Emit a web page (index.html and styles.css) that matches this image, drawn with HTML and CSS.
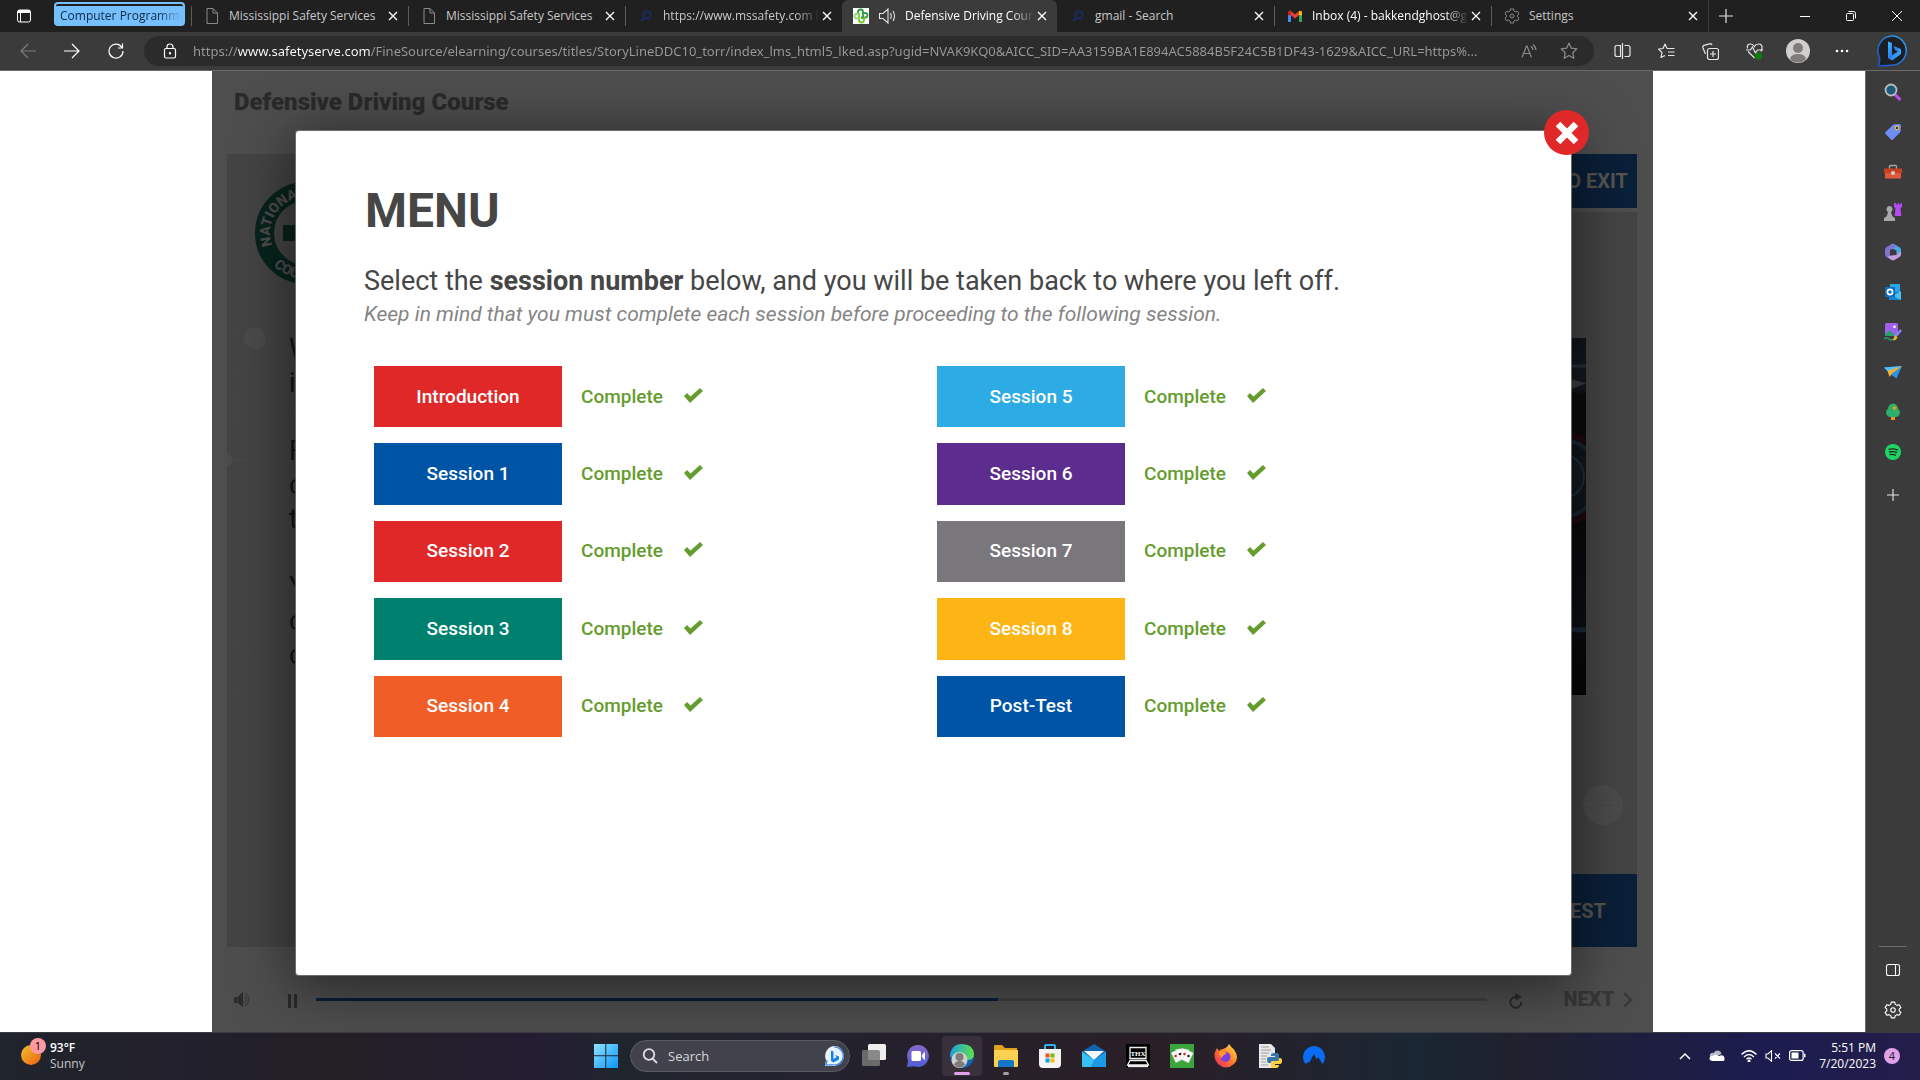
FILE: index.html
```html
<!DOCTYPE html>
<html lang="en">
<head>
<meta charset="utf-8">
<title>Defensive Driving Course</title>
<link rel="stylesheet" href="styles.css">
</head>
<body>
<header class="tabstrip">
  <button class="tab-actions" aria-label="Tab actions"><svg width="16" height="16" viewBox="0 0 16 16" fill="none" stroke="#fff"><rect x="1.5" y="2" width="13" height="12" rx="2"/><path d="M2 3.500h12" stroke-width="3"/><path d="M4.500 4v10"/></svg></button>
  <button class="tab-group"><span>Computer Programmi</span></button>
  <nav class="tabs" aria-label="Tabs">
    <div class="tab"><svg class="favicon" viewBox="0 0 16 16" fill="none" stroke="#8a8a8a"><path d="M3 .5h6l4.500 4.500v10.500H3zM9 .5V5h4.500"/></svg><a href="#t1">Mississippi Safety Services</a><button class="close" aria-label="Close tab"><svg viewBox="0 0 10 10"><path d="M1 1l8 8M9 1l-8 8"/></svg></button></div>
    <div class="tab"><svg class="favicon" viewBox="0 0 16 16" fill="none" stroke="#8a8a8a"><path d="M3 .5h6l4.500 4.500v10.500H3zM9 .5V5h4.500"/></svg><a href="#t2">Mississippi Safety Services</a><button class="close" aria-label="Close tab"><svg viewBox="0 0 10 10"><path d="M1 1l8 8M9 1l-8 8"/></svg></button></div>
    <div class="tab"><svg class="favicon" viewBox="0 0 16 16" fill="none" stroke="#1b2a6b" stroke-width="1.800"><circle cx="9" cy="7" r="3.600"/><path d="M6.500 9.500L3 13"/></svg><a href="#t3" class="fade">https://www.mssafety.com lo</a><button class="close" aria-label="Close tab"><svg viewBox="0 0 10 10"><path d="M1 1l8 8M9 1l-8 8"/></svg></button></div>
    <div class="tab active"><svg class="favicon" viewBox="0 0 16 16"><path fill="#fff" d="M0 0h16v16H0z"/><g fill="none" stroke-width="1.800"><path stroke="#2e9e3f" d="M5 7V4q0-2.500 2.500-2.500T10 4v7"/><path stroke="#2e9e3f" d="M9 5h3q2.500 0 2.500 2.300T12 9.500H8"/><path stroke="#6ccf1c" d="M11 9v3q0 2.500-2.500 2.500T6 12V6"/><path stroke="#8fdc6a" d="M7 10.500H4Q1.500 10.500 1.500 8T4 6h3"/></g></svg><svg class="audio" viewBox="0 0 18 16" fill="none" stroke="#e6e6e6" stroke-width="1.100"><path d="M1.500 5.500H5L10 1v14L5 10.500H1.500zM12.500 5q1.500 3 0 6M15 3q3 5 0 10"/></svg><a href="#t4" class="fade">Defensive Driving Cours</a><button class="close" aria-label="Close tab"><svg viewBox="0 0 10 10"><path d="M1 1l8 8M9 1l-8 8"/></svg></button></div>
    <div class="tab"><svg class="favicon" viewBox="0 0 16 16" fill="none" stroke="#1b2a6b" stroke-width="1.800"><circle cx="9" cy="7" r="3.600"/><path d="M6.500 9.500L3 13"/></svg><a href="#t5">gmail - Search</a><button class="close" aria-label="Close tab"><svg viewBox="0 0 10 10"><path d="M1 1l8 8M9 1l-8 8"/></svg></button></div>
    <div class="tab bright"><svg class="favicon" viewBox="0 0 16 16" fill="none" stroke-width="3"><path stroke="#4285f4" d="M2.500 14V5"/><path stroke="#34a853" d="M13.500 14V5"/><path stroke="#ea4335" d="M2 3.500l6 5 6-5"/><path stroke="#fbbc04" d="M13.500 3.200v4"/><path stroke="#c5221f" d="M2.500 3.200v4"/></svg><a href="#t6" class="fade">Inbox (4) - bakkendghost@g</a><button class="close" aria-label="Close tab"><svg viewBox="0 0 10 10"><path d="M1 1l8 8M9 1l-8 8"/></svg></button></div>
    <div class="tab"><svg class="favicon" viewBox="0 0 16 16" fill="none" stroke="#8a8a8a"><circle cx="8" cy="8" r="2"/><path d="M6.500 1h3l.5 2 1.500.9 2-.6 1.500 2.600L13.500 7.300v1.400l1.500 1.400-1.500 2.600-2-.6-1.500.9-.5 2h-3L6 13l-1.500-.9-2 .6L1 10.100l1.500-1.400V7.300L1 5.900l1.500-2.600 2 .6L6 3z" stroke-linejoin="round"/></svg><a href="#t7">Settings</a><button class="close" aria-label="Close tab"><svg viewBox="0 0 10 10"><path d="M1 1l8 8M9 1l-8 8"/></svg></button></div>
  </nav>
  <button class="new-tab" aria-label="New tab"><svg width="14" height="14" viewBox="0 0 14 14" stroke="#e6e6e6" stroke-width="1.200"><path d="M7 0v14M0 7h14"/></svg></button>
  <div class="window-controls">
    <button aria-label="Minimize"><svg width="10" height="10" viewBox="0 0 10 10" fill="none" stroke="#fff"><path d="M0 5.500h10"/></svg></button>
    <button aria-label="Restore"><svg width="10" height="10" viewBox="0 0 10 10" fill="none" stroke="#fff"><rect x=".5" y="2.500" width="7" height="7" rx="1"/><path d="M2.500.5h5q2 0 2 2v5"/></svg></button>
    <button aria-label="Close"><svg width="10" height="10" viewBox="0 0 10 10" fill="none" stroke="#fff"><path d="M0 0l10 10M10 0L0 10"/></svg></button>
  </div>
</header>

<div class="toolbar">
  <button class="nav-btn" aria-label="Back"><svg width="16" height="16" viewBox="0 0 16 16" fill="none" stroke="#7d7d7d" stroke-width="1.200"><path d="M16 8H1M8 1L1 8l7 7"/></svg></button>
  <button class="nav-btn" aria-label="Forward"><svg width="16" height="16" viewBox="0 0 16 16" fill="none" stroke="#fff" stroke-width="1.200"><path d="M0 8h15M8 1l7 7-7 7"/></svg></button>
  <button class="nav-btn" aria-label="Refresh"><svg width="16" height="16" viewBox="0 0 16 16" fill="none" stroke="#fff" stroke-width="1.200"><path d="M14 4.500A7 7 0 1 0 15 8M14.500.5v4.500h-4.500"/></svg></button>
  <div class="address">
    <svg width="14" height="16" viewBox="0 0 14 16" fill="none" stroke="#fff" stroke-width="1.200"><rect x="1.500" y="5.500" width="11" height="9.500" rx="1.500"/><path d="M4 5.500V4q0-3 3-3t3 3v1.500"/><circle cx="7" cy="10.300" r=".6" fill="#fff"/></svg>
    <input class="url" type="text" aria-label="Address" value="https://www.safetyserve.com/FineSource/elearning/courses/titles/StoryLineDDC10_torr/index_lms_html5_lked.asp?ugid=NVAK9KQ0&amp;AICC_SID=AA3159BA1E894AC5884B5F24C5B1DF43-1629&amp;AICC_URL=https%...">
    <button aria-label="Read aloud"><svg width="16" height="16" viewBox="0 0 16 16" fill="none" stroke="#8c8c8c" stroke-width="1.200"><path d="M1 14.500L5.500 3h.5l4.500 11.500M2.500 10.500h6.500M10 3.500q2 1.500 2 3.500M12 1.500q3 2.500 3 5.500"/></svg></button>
    <button aria-label="Add to favorites"><svg width="18" height="18" viewBox="0 0 16 16" fill="none" stroke="#8c8c8c" stroke-width="1.100" stroke-linejoin="round"><path d="M8 1l2.100 4.500 4.900.6-3.600 3.400.9 4.900L8 12l-4.300 2.400.9-4.900L1 6.100l4.900-.6z"/></svg></button>
  </div>
  <div class="tools">
    <button aria-label="Split screen"><svg width="17" height="16" viewBox="0 0 17 16" fill="none" stroke="#e6e6e6" stroke-width="1.200"><path d="M6.500 2.500H3q-2 0-2 2v7q0 2 2 2h3.500zM10.500 2.500H14q2 0 2 2v7q0 2-2 2h-3.500M8.500 0v16"/></svg></button>
    <button aria-label="Favorites"><svg width="17" height="16" viewBox="0 0 17 16" fill="none" stroke="#e6e6e6" stroke-width="1.200" stroke-linejoin="round"><path d="M9 5.500h0L7 1 5 5.500l-4.500.6L4 9.500 3 14.500l4-2M9 5.500h7.500M10 9h6.500M10 12.500h6.500"/></svg></button>
    <button aria-label="Collections"><svg width="17" height="17" viewBox="0 0 17 17" fill="none" stroke="#e6e6e6" stroke-width="1.200"><rect x="5.500" y="5.500" width="11" height="11" rx="2"/><path d="M11 8v6M8 11h6M3.500 11L1 5q-.6-2 1-2.600L7.500.8q2-.5 2.500 1.200"/></svg></button>
    <button aria-label="Browser essentials"><svg width="17" height="18" viewBox="0 0 17 18" fill="none" stroke="#e6e6e6" stroke-width="1.200"><path d="M8.500 16L2 9.500M1.500 6.500Q.5 2 4.500 2q2.500 0 4 2.500Q10 2 12.500 2q4 0 3.500 4.500l-1 3M0 8h4.500L6.500 5l3 6 2-3H17"/><circle cx="12.500" cy="14" r="3.800" fill="#0f7b0f" stroke="none"/></svg></button>
    <button aria-label="Profile"><svg width="24" height="24" viewBox="0 0 24 24"><circle cx="12" cy="12" r="12" fill="#d2d0ce"/><circle cx="12" cy="9" r="5" fill="#7f7d7b"/><path d="M4 20q1-5 8-5t8 5q-3 3.500-8 3.500T4 20z" fill="#7f7d7b"/></svg></button>
    <button aria-label="Settings and more"><svg width="14" height="4" viewBox="0 0 14 4" fill="#fff"><circle cx="2" cy="2" r="1.300"/><circle cx="7" cy="2" r="1.300"/><circle cx="12" cy="2" r="1.300"/></svg></button>
  </div>
  <button class="bing" aria-label="Bing chat"><svg width="32" height="32" viewBox="0 0 32 32"><defs><linearGradient id="bingRing" x1="0" y1="1" x2="1" y2="0"><stop stop-color="#1b4fd0"/><stop offset="1" stop-color="#29a5ea"/></linearGradient><linearGradient id="bingB" x1="0" y1="0" x2="1" y2="1"><stop stop-color="#37bdff"/><stop offset=".5" stop-color="#2f7bf5"/><stop offset="1" stop-color="#33d0e8"/></linearGradient></defs><path d="M16 1a14.500 14.500 0 1 1-3 29.200Q8 31 1.500 30.500 3 27 2.500 22A14.500 14.500 0 0 1 16 1z" fill="#1d1f24" stroke="url(#bingRing)" stroke-width="1.500"/><path d="M11 6.500l4 1.500v12l6-3.500-3-1.500-1.500-4 7.500 3v5L15 25.500l-4-2.500z" fill="url(#bingB)"/></svg></button>
</div>

<div class="workspace">
  <main class="page">
    <section class="stage">
      <h1 class="course-title">Defensive Driving Course</h1>
      <div class="slide">
        <svg class="network" aria-hidden="true"><g fill="#4b4b4b"><circle cx="28" cy="184" r="11"/><circle cx="0" cy="306" r="6"/><circle cx="1376" cy="651" r="20"/></g><g fill="none" stroke="#484848"><path d="M28 184L2 280M0 210l80 60M0 276l80 16M6 306h70M0 480l80 66M0 532l80 30M0 180l28 4M1345 646h60M1345 655l60-6M1360 535l50 26M1360 625l-14-20"/></g></svg>
        <div class="slide-left">
          <svg class="logo" width="102" height="102" viewBox="-51 -51 102 102"><circle r="41.500" fill="none" stroke="#08231c" stroke-width="19"/><path d="M-23-8h15v-15H8v15h15V8H8v15H-8V8h-15z" fill="#08231c"/><path id="arcTop" d="M-36 0A36 36 0 0 1 36 0" fill="none" transform="rotate(-25)"/><path id="arcLow" d="M-46 0A46 46 0 0 0 46 0" fill="none"/><text class="seal"><textPath href="#arcTop" startOffset="3">NATIONAL</textPath></text><text class="seal"><textPath href="#arcLow" startOffset="36">COUNCIL</textPath></text></svg>
          <p class="copy">W<br>i<br><br>F<br>c<br>t<br><br>Y<br>c<br>c</p>
        </div>
        <div class="slide-right">
          <button class="dark-btn exit">TO EXIT</button>
          <svg class="photo" viewBox="0 0 40 356" preserveAspectRatio="none"><defs><linearGradient id="dash" x1="0" y1="0" x2="0" y2="1"><stop stop-color="#0f151b"/><stop offset=".07" stop-color="#121820"/><stop offset=".14" stop-color="#151a21"/><stop offset=".16" stop-color="#0a0b0b"/><stop offset=".5" stop-color="#08090a"/><stop offset=".8" stop-color="#0c0e12"/><stop offset=".86" stop-color="#090909"/><stop offset="1" stop-color="#060606"/></linearGradient></defs><path fill="url(#dash)" d="M0 0h40v356H0z"/><path d="M25 28h15" stroke="#26323f" stroke-width="3"/><path d="M25 41l15 4-15 6z" fill="#3c4042"/><circle cx="16" cy="140" r="44" fill="#0c1116" stroke="#1e080e" stroke-width="6"/><circle cx="16" cy="140" r="38" fill="#0f161c" stroke="#1a2630" stroke-width="4"/><circle cx="16" cy="138" r="22" fill="#111a22" stroke="#222e38" stroke-width="2"/><path d="M25 291h15" stroke="#182838" stroke-width="5"/></svg>
          <button class="dark-btn post">POST-TEST</button>
        </div>
      </div>
      <div class="player">
        <button aria-label="Volume"><svg width="17" height="15" viewBox="0 0 17 15"><path d="M0 5h3.500v6H0zM4 4.500L9 0v15L4 11z" fill="#2b2b2b"/><path d="M10.500 4q4 3.500 0 7M11 1q8 6.500 0 13" fill="none" stroke="#3c3c3c" stroke-width="1.500"/></svg></button>
        <button class="pause" aria-label="Pause"><svg width="10" height="14" viewBox="0 0 10 14" fill="#292929"><path d="M0 0h3v14H0zM6 0h3v14H6z"/></svg></button>
        <progress class="seek" value="58.2" max="100" aria-label="Slide progress"></progress>
        <button class="replay" aria-label="Replay"><svg width="14" height="16" viewBox="0 0 14 16"><path d="M8 4A5.500 5.500 0 1 0 12.300 9" fill="none" stroke="#2b2b2b" stroke-width="2"/><path d="M6.500 0l6.500 4-6.500 3.500z" fill="#2b2b2b"/></svg></button>
        <button class="next">NEXT <svg width="9" height="16" viewBox="0 0 9 16" fill="none" stroke="#373737" stroke-width="2"><path d="M1 2l7 7-7 7"/></svg></button>
      </div>

      <div class="modal" role="dialog" aria-labelledby="menu-title">
        <button class="modal-close" aria-label="Close menu"><svg width="24" height="24" viewBox="0 0 24 24" stroke="#fff" stroke-width="6.500"><path d="M3 3l18 18M21 3L3 21"/></svg></button>
        <h2 id="menu-title">MENU</h2>
        <p class="lead">Select the <b>session number</b> below, and you will be taken back to where you left off.</p>
        <p class="note">Keep in mind that you must complete each session before proceeding to the following session.</p>
        <ul class="sessions">
          <li><button class="red">Introduction</button><span>Complete</span><svg viewBox="0 0 20 15"><path d="M1 8l3-3 3.500 3.500L17 0l3 3L7 15z"/></svg></li>
          <li><button class="blue">Session 1</button><span>Complete</span><svg viewBox="0 0 20 15"><path d="M1 8l3-3 3.500 3.500L17 0l3 3L7 15z"/></svg></li>
          <li><button class="red">Session 2</button><span>Complete</span><svg viewBox="0 0 20 15"><path d="M1 8l3-3 3.500 3.500L17 0l3 3L7 15z"/></svg></li>
          <li><button class="green">Session 3</button><span>Complete</span><svg viewBox="0 0 20 15"><path d="M1 8l3-3 3.500 3.500L17 0l3 3L7 15z"/></svg></li>
          <li><button class="orange">Session 4</button><span>Complete</span><svg viewBox="0 0 20 15"><path d="M1 8l3-3 3.500 3.500L17 0l3 3L7 15z"/></svg></li>
          <li><button class="sky">Session 5</button><span>Complete</span><svg viewBox="0 0 20 15"><path d="M1 8l3-3 3.500 3.500L17 0l3 3L7 15z"/></svg></li>
          <li><button class="purple">Session 6</button><span>Complete</span><svg viewBox="0 0 20 15"><path d="M1 8l3-3 3.500 3.500L17 0l3 3L7 15z"/></svg></li>
          <li><button class="gray">Session 7</button><span>Complete</span><svg viewBox="0 0 20 15"><path d="M1 8l3-3 3.500 3.500L17 0l3 3L7 15z"/></svg></li>
          <li><button class="amber">Session 8</button><span>Complete</span><svg viewBox="0 0 20 15"><path d="M1 8l3-3 3.500 3.500L17 0l3 3L7 15z"/></svg></li>
          <li><button class="blue">Post-Test</button><span>Complete</span><svg viewBox="0 0 20 15"><path d="M1 8l3-3 3.500 3.500L17 0l3 3L7 15z"/></svg></li>
        </ul>
      </div>
    </section>
  </main>

  <aside class="sidebar" aria-label="Browser sidebar">
    <button aria-label="Search"><svg viewBox="0 0 18 18"><path d="M10.500 11l6 6" stroke="#c04cf0" stroke-width="3"/><circle cx="7" cy="7" r="5.500" fill="#1d5a7a" stroke="#b9bcc0" stroke-width="1.800"/></svg></button>
    <button aria-label="Shopping"><svg viewBox="0 0 18 18"><path d="M9.500 1.500L15 1q2 0 2 2l-.5 6-7.500 7.500q-1 1-2 0L1.500 11q-1-1 0-2z" fill="#6f8df7"/><circle cx="13" cy="5" r="1.800" fill="#335" stroke="#f2c02a" stroke-width="1.200"/></svg></button>
    <button aria-label="Tools"><svg viewBox="0 0 18 18"><path d="M5.500 6V3.500q0-1 1-1h5q1 0 1 1V6" fill="none" stroke="#a5a5a5" stroke-width="1.400"/><path d="M1 9h16v6.500H1z" fill="#e0583a"/><path d="M0 5.500h18V10H0z" fill="#c7401f"/><circle cx="9" cy="10" r="2" fill="#cfcfcf"/></svg></button>
    <button aria-label="Games"><svg viewBox="0 0 18 18"><path d="M10 0h2v1.500h1.500V0h1.500v1.500h1.500V0H18v4l-1.500 1 .8 8h-6.600l.8-8L10 4z" fill="#b44af0"/><path d="M5.500 3a3.200 3.200 0 0 1 2.300 5.300L7 9.500l1.500 4 2.500 1.500v3H0v-3l2.500-1.500L4 9.500l-.8-1.200A3.200 3.200 0 0 1 5.500 3z" fill="#a8a8a8"/></svg></button>
    <button aria-label="Microsoft 365"><svg viewBox="0 0 18 18"><path d="M9 .5l6.500 3.800q1.500.8 1.500 2.500v5L12.500 11V7.500L7 5V1.500z" fill="#4aa8ea"/><path d="M9 .5L2.500 4Q1 5 1 6.500v5Q1 13 2.500 14L7 16l-1-4V7l6-3z" fill="#8072d0"/><path d="M3 14l4.500 3q1.500.8 3 0l5-3q1.500-1 1.500-2.500V8.500L12 12l-5 .5z" fill="#c39be0"/></svg></button>
    <button aria-label="Outlook"><svg viewBox="0 0 18 18"><path d="M6 1h10v9H6z" fill="#28a8ea"/><path d="M5 8l12 1v8H5z" fill="#1487d4"/><path d="M17 8l-8 5 8 4z" fill="#50c0f4"/><path d="M1 4h10v10H1z" fill="#0f6cbd"/><circle cx="6" cy="9" r="2.600" fill="none" stroke="#fff" stroke-width="1.600"/></svg></button>
    <button aria-label="Image creator"><svg viewBox="0 0 18 18"><rect x="1" y="0" width="13" height="13" rx="1.500" fill="#a060ee"/><path d="M1 12l4.500-5 6 6H1z" fill="#28a06a"/><circle cx="10.500" cy="3.800" r="1.300" fill="#fff"/><path d="M17 7l-6 7" stroke="#7d8cf5" stroke-width="2.500"/><path d="M11 12l2.500 2.500Q12 18 8 17q2-1 3-5z" fill="#f0b429"/><path d="M0 16q3-2 5 0t4 0" stroke="#28a06a" stroke-width="1.500" fill="none"/></svg></button>
    <button aria-label="Drop"><svg viewBox="0 0 18 18"><path d="M0 4.500L18 3 12.500 15.500 7.500 12z" fill="#2c93ec"/><path d="M0 4.500L18 3 4 8.500z" fill="#54c0ff"/><path d="M3.500 8L18 3 8 10.500 5.500 14z" fill="#f5b22a"/></svg></button>
    <button aria-label="E-tree"><svg viewBox="0 0 18 18"><path d="M7 12h4v5H7z" fill="#f28c1d"/><path d="M9 .5q4.500.5 5 5 3 3 1.500 6-1 2.500-4 2.500h-5q-3 0-4-2.500-1.500-3 1.500-6 .5-4.500 5-5z" fill="#2eae6b"/><path d="M10.500 2l.8 2.200 2.200.8-2.200.8-.8 2.200-.8-2.200L7.500 5l2.200-.8z" fill="#ffa21a"/></svg></button>
    <button aria-label="Spotify"><svg viewBox="0 0 18 18"><circle cx="9" cy="9" r="8" fill="#1ed760"/><path d="M4.500 6.300q5-1.300 9.500.9M5 9q4.500-1.200 8 .8M5.500 11.700q3.500-.9 6.500.7" fill="none" stroke="#262626" stroke-width="1.300"/></svg></button>
    <button class="add" aria-label="Customize"><svg viewBox="0 0 18 18" stroke="#e6e6e6" stroke-width="1.100"><path d="M9 3v12M3 9h12"/></svg></button>
    <hr>
    <button aria-label="Toggle sidebar"><svg viewBox="0 0 18 18" fill="none" stroke="#fff" stroke-width="1.100"><rect x="2.500" y="3.500" width="13" height="11" rx="2"/><path d="M11.500 3.500v11"/></svg></button>
    <button aria-label="Sidebar settings"><svg viewBox="0 0 16 16" fill="none" stroke="#fff"><circle cx="8" cy="8" r="2"/><path d="M6.500 1h3l.5 2 1.500.9 2-.6 1.500 2.600L13.500 7.300v1.400l1.500 1.400-1.500 2.600-2-.6-1.500.9-.5 2h-3L6 13l-1.500-.9-2 .6L1 10.100l1.500-1.400V7.300L1 5.900l1.500-2.600 2 .6L6 3z" stroke-linejoin="round"/></svg></button>
  </aside>
</div>

<footer class="taskbar">
  <button class="weather">
    <span class="sun"><span class="alert">1</span></span>
    <span class="forecast"><b>93°F</b>Sunny</span>
  </button>
  <div class="apps">
    <button class="start" aria-label="Start"><svg width="24" height="24" viewBox="0 0 24 24"><defs><linearGradient id="win" x1="0" y1="0" x2="1" y2="1"><stop stop-color="#8fe4ff"/><stop offset="1" stop-color="#0a94fb"/></linearGradient></defs><path fill="url(#win)" d="M0 0h11.300v11.300H0zM12.300 0H24v11.300H12.300zM0 12.300h11.300V24H0zM12.300 12.300H24V24H12.300z"/></svg></button>
    <div class="search"><svg width="16" height="16" viewBox="0 0 16 16" fill="none" stroke="#dcdce0" stroke-width="1.800"><circle cx="7" cy="6.500" r="5.300"/><path d="M10.500 10.500L15 15"/></svg><input type="text" placeholder="Search" aria-label="Search"><svg width="20" height="20" viewBox="0 0 20 20"><path d="M10 0a10 10 0 1 1-1.500 19.900L1 20l1-6A10 10 0 0 1 10 0z" fill="#e8f4ff"/><path d="M10 1a9 9 0 1 1-1.500 17.800L2 19l1-5" fill="none" stroke="#2c7fe8" stroke-width="1.200"/><path d="M7 4.500l2.500 1v7.500l3-2-1.500-2 4 1.500v3L9.500 16.500 7 15z" fill="#1683e8"/></svg></div>
    <button aria-label="Task view"><svg viewBox="0 0 24 24"><rect x="6" y="0" width="18" height="16" rx="1.500" fill="#efefef"/><rect x="0" y="6" width="18" height="16" rx="1.500" fill="#777" opacity=".85"/></svg></button>
    <button aria-label="Chat"><svg viewBox="0 0 24 24"><defs><linearGradient id="chat" x1="0" y1="0" x2="0" y2="1"><stop stop-color="#8a68cc"/><stop offset="1" stop-color="#4f5fd6"/></linearGradient></defs><path d="M12 1a11 11 0 1 1-4 21.300L1 23l1-6.500A11 11 0 0 1 12 1z" fill="url(#chat)"/><rect x="5.500" y="7" width="9.500" height="10" rx="1.500" fill="#fff"/><path d="M16 11l3-3.500v9L16 13z" fill="#fff"/></svg></button>
    <button class="running current" aria-label="Edge"><svg viewBox="0 0 24 24"><defs><linearGradient id="edge" x1="0" y1="0" x2="1" y2="0"><stop stop-color="#1a9fe0"/><stop offset="1" stop-color="#5fe04a"/></linearGradient></defs><circle cx="12" cy="12" r="12" fill="#0f65b8"/><path d="M0 12Q1 0 12 0q11 0 12 10 0 6-7 6-5 0-4-4-6 6-13 0z" fill="url(#edge)"/><circle cx="9.500" cy="16" r="8" fill="#d0cfce"/><circle cx="9.500" cy="13" r="4" fill="#7d7b7a"/><path d="M4 21q1-4 5.500-4t5.500 4q-5.500 5-11 0z" fill="#7d7b7a"/></svg></button>
    <button class="running" aria-label="File Explorer"><svg viewBox="0 0 24 24"><path d="M0 2q0-1 1-1h7l3 3h12v6H0z" fill="#e0a21c"/><path d="M0 6h24v16q0 1-1 1H1q-1 0-1-1z" fill="#fcd053"/><path d="M4 23v-5q0-2 2-2h12q2 0 2 2v5z" fill="#1277c8"/></svg></button>
    <button aria-label="Microsoft Store"><svg viewBox="0 0 24 24"><path d="M7 6V2q0-1 1-1h8q1 0 1 1v4" fill="none" stroke="#2fb0f0" stroke-width="2"/><path d="M1 5h22v15q0 4-4 4H5q-4 0-4-4z" fill="#f4f4f4"/><path fill="#f25022" d="M7.500 9.500h4v4h-4z"/><path fill="#7fba00" d="M12.500 9.500h4v4h-4z"/><path fill="#00a4ef" d="M7.500 14.500h4v4h-4z"/><path fill="#ffb900" d="M12.500 14.500h4v4h-4z"/></svg></button>
    <button aria-label="Mail"><svg viewBox="0 0 24 24"><path d="M12 0l12 7.500V23H0V7.500z" fill="#1263b0"/><path d="M2 7h20l-10 9z" fill="#f3f6fa"/><path d="M0 7.500l12 8.500L24 23H0z" fill="#36c2f5"/><path d="M24 7.500L12 16l-3 7h15z" fill="#1d9ae6"/></svg></button>
    <button aria-label="THX"><svg viewBox="0 0 24 24"><path fill="#000" d="M0 0h24v24H0z"/><path d="M4 3.500h16v11H4zM4 16.500L1.500 21h21L20 16.500zM2 22.500h20" fill="none" stroke="#eee" stroke-width="1.300"/><text x="12" y="11.500" class="thx">THX</text></svg></button>
    <button aria-label="Solitaire"><svg viewBox="0 0 24 24"><path fill="#3aa53a" d="M0 0h24v24H0z"/><g fill="#fff" stroke="#b8b8b8" stroke-width=".4"><rect x="3" y="7" width="7" height="11" transform="rotate(-25 6 12)"/><rect x="6.500" y="5" width="7" height="11" transform="rotate(-8 9 11)"/><rect x="11" y="5" width="7" height="11" transform="rotate(10 14 11)"/><rect x="14.500" y="7" width="7" height="11" transform="rotate(26 18 12)"/></g><g fill="#d22"><circle cx="5.500" cy="12" r="1.300"/><circle cx="14.500" cy="10" r="1.300"/></g><g fill="#222"><circle cx="10" cy="10" r="1.300"/><circle cx="18.500" cy="12" r="1.300"/></g></svg></button>
    <button aria-label="Firefox"><svg viewBox="0 0 24 24"><defs><linearGradient id="fox" x1="1" y1="0" x2="0" y2="1"><stop stop-color="#ffe94a"/><stop offset=".5" stop-color="#ff7a2a"/><stop offset="1" stop-color="#e8206a"/></linearGradient></defs><path d="M15 0q2 3 5 5.500Q26 14 20 20q-8 7-16 0-6-7-2-14l1-2 2 3q1-2 4-2 4-1 6-5z" fill="url(#fox)"/><circle cx="11.500" cy="13" r="5" fill="#7b3fe0"/><path d="M5 8q5-2 8 2-4 0-5 4-3-2-3-6z" fill="#ff9a2a"/></svg></button>
    <button aria-label="Python"><svg viewBox="0 0 24 24"><path d="M1 0h12l4 4v20H1z" fill="#e8e8e8"/><path d="M3 3h8M3 6h10M3 9h8M3 12h6M3 15h5M3 18h5M3 21h7" stroke="#a0a0a0"/><path d="M16 9h3q2 0 2 2v4q0 2-2 2h-5q-1 0-1 2h-2q-2 0-2-3t2-3h6v-1h-4v-1q0-2 3-2z" fill="#3a75a8"/><path d="M18 24h-3q-2 0-2-2v-3q0-2 2-2h4q2 0 2-2v-1h1q2 0 2 3t-2 3h-5v1h4q0 3-3 3z" fill="#ffd13f"/></svg></button>
    <button aria-label="NordVPN"><svg viewBox="0 0 24 24"><path d="M3.500 20A11 11 0 1 1 20.500 20L16 13l-1.500 2.500L12 10l-5 9-.5-1z" fill="#0a6bf5"/></svg></button>
  </div>
  <div class="tray">
    <button aria-label="Show hidden icons"><svg width="12" height="12" viewBox="0 0 12 12" fill="none" stroke="#fff" stroke-width="1.500"><path d="M1 9l5-5 5 5"/></svg></button>
    <button class="cloud" aria-label="OneDrive"><svg width="16" height="11" viewBox="0 0 16 11"><path d="M3 8q-3-1-2-3.500T4.500 3Q6 0 9 .5T12.500 4z" fill="#b9b9c8"/><path d="M4 11q-4-.5-3.500-3T4 6q2-3 6 0 5-2 5.500 2t-3 3z" fill="#fff"/></svg></button>
    <button class="quick" aria-label="Network, volume and battery">
      <svg width="16" height="12" viewBox="0 0 16 12" fill="none" stroke="#fff" stroke-width="1.300"><path d="M.5 4.500q7.500-7.500 15 0M3 7q5-5 10 0M5.500 9.300q2.500-2.500 5 0"/><circle cx="8" cy="11" r=".8" fill="#fff"/></svg>
      <svg width="16" height="12" viewBox="0 0 16 12" fill="none" stroke="#fff" stroke-width="1.100"><path d="M1 4h2l3.500-3.300v10.600L3 8H1zM10 3.500l5 5M15 3.500l-5 5"/></svg>
      <svg width="17" height="11" viewBox="0 0 17 11"><rect x=".6" y=".6" width="13.500" height="9.800" rx="2" fill="none" stroke="#fff" stroke-width="1.200"/><path d="M2.500 2.500h7v6h-7zM15 3.500l1.500.5v3l-1.500.5z" fill="#fff"/></svg>
    </button>
    <button class="clock">5:51 PM<br>7/20/2023</button>
    <span class="count">4</span>
  </div>
</footer>
</body>
</html>
```
FILE: styles.css
```css
* { box-sizing: border-box; }

body {
  margin: 0;
  height: 100vh;
  display: flex;
  flex-direction: column;
  overflow: hidden;
  background: #fff;
  font: 12px/16px "Open Sans", sans-serif;
  color: #fff;
}

button {
  display: flex;
  align-items: center;
  justify-content: center;
  margin: 0;
  padding: 0;
  border: 0;
  background: none;
  font: inherit;
  color: inherit;
}

svg { flex: none; display: block; }
a { color: inherit; text-decoration: none; }

/* Tab strip */
.tabstrip {
  display: flex;
  flex: none;
  align-items: center;
  height: 32px;
  padding-left: 16px;
  background: #202020;
}
.tab-group {
  justify-content: flex-start;
  width: 131px;
  height: 20px;
  margin: 0 6px 0 22px;
  padding-left: 6px;
  border-radius: 4px;
  background: #76c0ff;
  box-shadow: 0 -4px 0 -2px #202020, 0 -4px 0 0 #76c0ff;
  color: #10283c;
  white-space: nowrap;
}
.tab-group span,
.fade {
  -webkit-mask-image: linear-gradient(90deg, #000 calc(100% - 24px), transparent);
  mask-image: linear-gradient(90deg, #000 calc(100% - 24px), transparent);
}
.tabs {
  display: flex;
  flex: 1;
  max-width: 1517px;
  height: 32px;
}
.tab {
  display: flex;
  flex: 1;
  min-width: 0;
  align-items: center;
  padding: 0 8px 0 13px;
  color: #c8c8c8;
  background: linear-gradient(#5c5c5c, #5c5c5c) left center / 1px 20px no-repeat;
}
.tab.active { background: #3b3b3b; border-radius: 6px 6px 0 0; color: #fff; padding-left: 11px; }
.tab.active + .tab { background: none; }
.tab.bright { color: #fff; }
.tab a {
  flex: 1;
  min-width: 0;
  white-space: nowrap;
}
.favicon { width: 16px; height: 16px; margin-right: 9px; }
.audio { width: 18px; height: 16px; margin-right: 9px; }
.close { width: 14px; height: 14px; }
.close svg { width: 10px; height: 10px; stroke: #fff; stroke-width: 1.3; }
.new-tab { width: 34px; height: 32px; border-left: 1px solid #3c3c3c; }
.window-controls { display: flex; margin-left: auto; }
.window-controls button { width: 46px; height: 32px; }

/* Toolbar */
.toolbar {
  display: flex;
  flex: none;
  align-items: center;
  height: 39px;
  padding: 0 2px 0 6px;
  background: #3b3b3b;
  border-bottom: 1px solid #6a6a6a;
}
.nav-btn { width: 44px; height: 30px; }
.address {
  display: flex;
  flex: 1;
  align-items: center;
  gap: 12px;
  height: 30px;
  margin-left: 6px;
  padding: 0 11px 0 19px;
  border-radius: 15px;
  background: #2b2b2b;
}
.address button { width: 28px; height: 28px; }
.url {
  flex: 1;
  min-width: 0;
  height: 24px;
  margin-left: 4px;
  padding: 0;
  border: 0;
  outline: 0;
  font: 13px/24px "Noto Sans", sans-serif;
  color: transparent;
  background: linear-gradient(90deg, #9a9a9a 45px, #fff 45px, #fff 177px, #9a9a9a 177px);
  -webkit-background-clip: text;
  background-clip: text;
}
.tools { display: flex; padding: 0 4px 0 6px; }
.tools button { width: 44px; height: 30px; }
.bing { width: 50px; height: 38px; }

/* Workspace */
.workspace { display: flex; flex: 1; min-height: 0; }
.page { display: flex; flex: 1; justify-content: center; min-width: 0; }

.stage {
  position: relative;
  display: flex;
  flex-direction: column;
  width: 100%;
  max-width: 1441px;
  padding: 15px 16px 0 15px;
  background: #4e4e4e;
  font-family: Roboto, sans-serif;
  overflow: hidden;
}
.course-title {
  margin: 0 0 36px 7px;
  font-size: 24px;
  line-height: 32px;
  font-weight: 900;
  color: #2a2a2a;
}
.slide {
  position: relative;
  display: flex;
  flex: 1;
  justify-content: space-between;
  background: #444;
}
.network { position: absolute; inset: 0; width: 100%; height: 100%; overflow: hidden; }
.slide-left, .slide-right { position: relative; display: flex; flex-direction: column; }
.slide-left { padding: 28px 0 0 28px; }
.seal { font: 900 14px Roboto, sans-serif; fill: #4c4c4c; }
.copy {
  margin: 48px 0 0 34px;
  font-size: 27px;
  line-height: 34px;
  color: #141414;
}
.slide-right { align-items: flex-end; }
.dark-btn { background: #0a1f38; color: #56544f; font-weight: 700; font-size: 20px; }
.exit { width: 190px; height: 58px; padding-right: 9px; justify-content: flex-end; border-bottom: 4px solid #4e4e4e; }
.photo { width: 40px; height: 357px; margin: 126px 51px auto 0; }
.post { width: 190px; height: 73px; padding-right: 31px; justify-content: flex-end; }

.player {
  display: flex;
  flex: none;
  align-items: center;
  height: 85px;
  padding: 23px 5px 4px 7px;
}
.pause { margin: 3px 0 0 37px; }
.seek {
  flex: 1;
  height: 3px;
  margin: 0 22px 0 18px;
  border: 0;
  -webkit-appearance: none;
  appearance: none;
  background: #404040;
}
.seek::-webkit-progress-bar { background: #404040; }
.seek::-webkit-progress-value { background: #0a1f38; }
.replay { margin-top: 3px; }
.next { gap: 9px; margin-left: 40px; font-size: 20px; font-weight: 900; color: #373737; }

/* Session menu */
.modal {
  position: absolute;
  inset: 60px 82px 57px 84px;
  padding: 50px 68px;
  border-radius: 3px;
  background: #fff;
  box-shadow: 0 0 0 1px #6c6c6c, 0 8px 55px 5px rgba(0, 0, 0, .5);
  color: #464646;
}
.modal-close {
  position: absolute;
  top: -21px;
  right: -18px;
  width: 45px;
  height: 45px;
  border-radius: 50%;
  background: #e02828;
}
.modal h2 { margin: 0 0 23px 1px; font-size: 48px; line-height: 60px; font-weight: 700; }
.lead { margin: 0; font-size: 27px; line-height: 34px; }
.note { margin: 0; font-size: 21px; line-height: 32px; font-style: italic; color: #858585; }
.sessions {
  display: grid;
  grid-template-rows: repeat(5, 1fr);
  grid-auto-flow: column;
  grid-auto-columns: 563px;
  row-gap: 16px;
  min-height: 371px;
  margin: 36px 0 0 10px;
  padding: 0;
  list-style: none;
}
.sessions li { display: flex; align-items: center; font-size: 19px; font-weight: 500; color: #649c2d; }
.sessions button { align-self: stretch; width: 188px; margin-right: 19px; color: #fff; }
.sessions span { width: 102px; }
.sessions svg { width: 20px; height: 15px; margin-bottom: 3px; fill: #649c2d; }
.red { background: #e02828; }
.blue { background: #0054a6; }
.green { background: #00806e; }
.orange { background: #f15d27; }
.sky { background: #2dabe4; }
.purple { background: #5c2d8e; }
.gray { background: #79767c; }
.amber { background: #fdb515; }

/* Sidebar */
.sidebar {
  display: flex;
  flex: none;
  flex-direction: column;
  align-items: center;
  width: 55px;
  padding-top: 1px;
  border-left: 1px solid #6a6a6a;
  background: #3b3b3b;
}
.sidebar button { width: 40px; height: 40px; }
.sidebar svg { width: 18px; height: 18px; }
.sidebar .add { margin-top: 3px; }
.sidebar hr { width: 28px; margin: auto 0 3px; border: 0; border-top: 1px solid #6a6a6a; }
.sidebar button:last-child { margin-bottom: 2px; }

/* Taskbar */
.taskbar {
  display: grid;
  grid-template-columns: 1fr auto 1fr;
  align-items: center;
  flex: none;
  height: 48px;
  padding-bottom: 2px;
  border-top: 1px solid #3c3c44;
  background: linear-gradient(90deg, #20242c, #22202c 10%, #231f24 18%, #241d33 28%, #20252d 32%, #23222e 42%, #2a1f27 60%, #1a2633 74%, #1f212d 79%, #1c1c50 92%, #231d49);
}
.weather { justify-self: start; gap: 9px; margin-left: 21px; text-align: left; }
.sun { position: relative; width: 20px; height: 20px; margin-top: -2px; border-radius: 50%; background: linear-gradient(135deg, #efc22e, #ee5f10); }
.alert { position: absolute; top: -7px; left: 9px; width: 16px; height: 16px; border-radius: 50%; background: #ff99a4; color: #000; text-align: center; font-size: 11px; }
.forecast { color: #c4c4c8; }
.forecast b { display: block; font-weight: 600; color: #fff; }
.apps { display: flex; align-items: center; padding-left: 8px; }
.apps button { position: relative; width: 40px; height: 40px; margin-left: 4px; border-radius: 4px; }
.apps button svg { width: 24px; height: 24px; }
.apps .start { width: 24px; margin: 0 12px 0 0; }
.apps .current { background: #38303a; }
.running::after { content: ""; position: absolute; left: 17px; bottom: 1px; width: 6px; height: 3px; border-radius: 2px; background: #a0a0a0; }
.current::after { left: 12px; width: 16px; background: #e0a0ea; }
.search {
  display: flex;
  align-items: center;
  gap: 10px;
  width: 220px;
  height: 32px;
  padding: 0 5px 0 11px;
  border: 1px solid #5a5a62;
  border-radius: 16px;
  background: #42424c;
}
.search input { flex: 1; min-width: 0; padding: 0; border: 0; background: none; outline: 0; font: 13px/20px "Open Sans", sans-serif; color: #d6d6da; }
.search input::placeholder { color: #d6d6da; opacity: 1; }
.thx { font: 700 7px "Liberation Serif", serif; fill: #fff; text-anchor: middle; }
.tray { display: flex; justify-self: end; align-items: center; margin-right: 20px; }
.cloud { margin-left: 18px; }
.quick { gap: 8px; margin-left: 16px; }
.clock { margin: 0 8px 0 13px; text-align: right; }
.count { width: 16px; height: 16px; border-radius: 50%; background: #e0a0ea; color: #222; text-align: center; font-size: 11px; }
```
